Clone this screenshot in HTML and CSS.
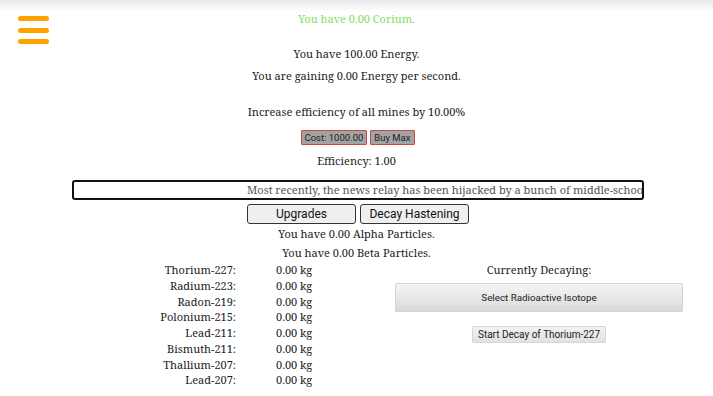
FILE: index.html
```html
<!DOCTYPE html>
<html lang="en">
<head>
  <meta charset="UTF-8" />
  <meta name="viewport" content="width=device-width, initial-scale=1.0" />
  <title>Corium</title>
  <link rel="stylesheet" href="styles.css">
</head>
<body>
  <button class="menu-btn" aria-label="Menu">
    <span></span>
    <span></span>
    <span></span>
  </button>

  <div class="corium">You have 0.00 Corium.</div>

  <div class="energy">You have 100.00 Energy.</div>
  <div class="gain">You are gaining 0.00 Energy per second.</div>

  <div class="upgrade-text">Increase efficiency of all mines by 10.00%</div>
  <div class="buy-row">
    <button class="buy-btn">Cost: 1000.00</button>
    <button class="buy-btn">Buy Max</button>
  </div>
  <div class="efficiency">Efficiency: 1.00</div>

  <div class="news">
    <div class="news-text">Most recently, the news relay has been hijacked by a bunch of middle-schoolers who think they are funny.</div>
  </div>

  <div class="tabs">
    <button class="tab">Upgrades</button>
    <button class="tab">Decay Hastening</button>
  </div>

  <div class="particles">You have 0.00 Alpha Particles.</div>
  <div class="particles">You have 0.00 Beta Particles.</div>

  <div class="decay">
    <div class="isotopes">
      <div class="iso-name">Thorium-227:</div><div class="iso-amt">0.00 kg</div>
      <div class="iso-name">Radium-223:</div><div class="iso-amt">0.00 kg</div>
      <div class="iso-name">Radon-219:</div><div class="iso-amt">0.00 kg</div>
      <div class="iso-name">Polonium-215:</div><div class="iso-amt">0.00 kg</div>
      <div class="iso-name">Lead-211:</div><div class="iso-amt">0.00 kg</div>
      <div class="iso-name">Bismuth-211:</div><div class="iso-amt">0.00 kg</div>
      <div class="iso-name">Thallium-207:</div><div class="iso-amt">0.00 kg</div>
      <div class="iso-name">Lead-207:</div><div class="iso-amt">0.00 kg</div>
    </div>

    <div class="decay-panel">
      <div class="decay-title">Currently Decaying:</div>
      <button class="select-btn">Select Radioactive Isotope</button>
      <button class="start-btn">Start Decay of Thorium-227</button>
    </div>
  </div>
</body>
</html>
```

FILE: styles.css
```css
body {
  margin: 0;
  font-family: 'Noto Serif', 'DejaVu Serif', serif;
  font-size: 11px;
  color: #222;
  text-align: center;
  background: linear-gradient(to bottom, #e9e9e9 0, #ffffff 12px) no-repeat;
  background-color: #fff;
}

button {
  font-family: Roboto, 'Liberation Sans', sans-serif;
  cursor: pointer;
}

.menu-btn {
  position: absolute;
  left: 18px;
  top: 16px;
  display: flex;
  flex-direction: column;
  gap: 6.5px;
  padding: 0;
  border: none;
  background: none;
}

.menu-btn span {
  display: block;
  width: 31px;
  height: 5px;
  border-radius: 3px;
  background: #ffa200;
}

.corium {
  margin-top: 9px;
  line-height: 20px;
  color: #7fe05a;
}

.energy {
  margin-top: 15px;
  line-height: 20px;
}

.gain {
  margin-top: 2px;
  line-height: 20px;
}

.upgrade-text {
  margin-top: 16px;
  line-height: 20px;
}

.buy-row {
  margin-top: 8px;
  padding-left: 2px;
  display: flex;
  justify-content: center;
  gap: 3px;
}

.buy-btn {
  height: 15px;
  padding: 0 3px;
  font-size: 9.5px;
  color: #222;
  background: #a3a3a3;
  border: 1px solid #d24545;
  border-radius: 1px;
}

.efficiency {
  margin-top: 6px;
  line-height: 20px;
}

.news {
  margin: 9px 0 0 72px;
  width: 572px;
  height: 20px;
  box-sizing: border-box;
  border: 2px solid #111;
  border-radius: 3px;
  overflow: hidden;
}

.news-text {
  padding-left: 173px;
  line-height: 16px;
  white-space: nowrap;
  text-align: left;
  color: #555;
}

.tabs {
  margin-top: 4px;
  padding-left: 3px;
  display: flex;
  justify-content: center;
  gap: 4px;
}

.tab {
  width: 109px;
  height: 20px;
  padding: 0;
  font-size: 12px;
  color: #111;
  background: #efefef;
  border: 1px solid #333;
  border-radius: 3px;
}

.particles {
  line-height: 19px;
}

.decay {
  display: grid;
  grid-template-columns: 395px 288px;
}

.isotopes {
  display: grid;
  grid-template-columns: 236px auto;
  column-gap: 40px;
  align-content: start;
  line-height: 15.75px;
}

.iso-name {
  text-align: right;
}

.iso-amt {
  text-align: left;
}

.decay-panel {
  display: flex;
  flex-direction: column;
  align-items: center;
}

.decay-title {
  line-height: 16px;
}

.select-btn {
  margin-top: 5px;
  width: 100%;
  height: 29px;
  font-size: 9.8px;
  color: #222;
  background: linear-gradient(to bottom, #f5f5f5, #dadada);
  border: 1px solid #d4d4d4;
  border-radius: 1px;
}

.start-btn {
  margin-top: 14px;
  height: 17px;
  padding: 0 5px;
  font-size: 10px;
  color: #222;
  background: linear-gradient(to bottom, #f2f2f2, #e2e2e2);
  border: 1px solid #d6d6d6;
  border-radius: 1px;
}
```
